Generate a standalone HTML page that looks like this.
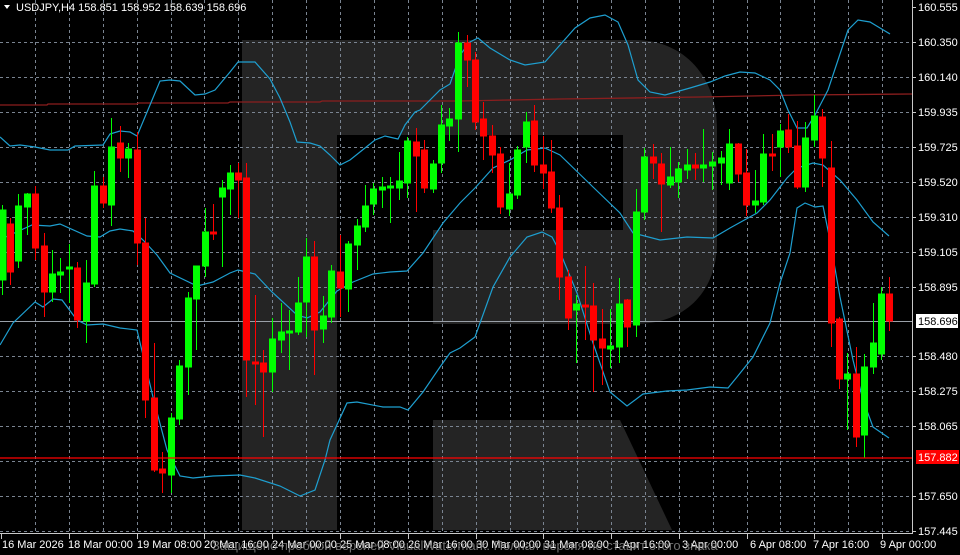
<!DOCTYPE html>
<html><head><meta charset="utf-8"><style>
html,body{margin:0;padding:0;background:#000;}
body{width:960px;height:555px;overflow:hidden;}
svg{display:block;font-family:"Liberation Sans","Noto Sans CJK JP",sans-serif;}
</style></head><body>
<svg width="960" height="555" viewBox="0 0 960 555" xmlns="http://www.w3.org/2000/svg">
<rect width="960" height="555" fill="#000"/>
<!-- watermark R -->
<path d="M242,40 H635 C685,40 717,78 717,128 V242 C717,292 685,324 635,324 H433 V230 H623 V135 H337 V530 H242 Z" fill="#242424"/>
<path d="M433,420 H620 L672,530 H433 Z" fill="#242424"/>
<!-- grid -->
<g stroke="#7a8491" stroke-width="1" stroke-dasharray="3,3">
<line x1="35.5" y1="0" x2="35.5" y2="532"/><line x1="69.5" y1="0" x2="69.5" y2="532"/><line x1="103.5" y1="0" x2="103.5" y2="532"/><line x1="137.5" y1="0" x2="137.5" y2="532"/><line x1="171.5" y1="0" x2="171.5" y2="532"/><line x1="204.5" y1="0" x2="204.5" y2="532"/><line x1="238.5" y1="0" x2="238.5" y2="532"/><line x1="272.5" y1="0" x2="272.5" y2="532"/><line x1="306.5" y1="0" x2="306.5" y2="532"/><line x1="340.5" y1="0" x2="340.5" y2="532"/><line x1="374.5" y1="0" x2="374.5" y2="532"/><line x1="408.5" y1="0" x2="408.5" y2="532"/><line x1="442.5" y1="0" x2="442.5" y2="532"/><line x1="476.5" y1="0" x2="476.5" y2="532"/><line x1="510.5" y1="0" x2="510.5" y2="532"/><line x1="543.5" y1="0" x2="543.5" y2="532"/><line x1="577.5" y1="0" x2="577.5" y2="532"/><line x1="611.5" y1="0" x2="611.5" y2="532"/><line x1="645.5" y1="0" x2="645.5" y2="532"/><line x1="679.5" y1="0" x2="679.5" y2="532"/><line x1="713.5" y1="0" x2="713.5" y2="532"/><line x1="747.5" y1="0" x2="747.5" y2="532"/><line x1="780.5" y1="0" x2="780.5" y2="532"/><line x1="814.5" y1="0" x2="814.5" y2="532"/><line x1="848.5" y1="0" x2="848.5" y2="532"/><line x1="882.5" y1="0" x2="882.5" y2="532"/>
<line x1="0" y1="42.5" x2="912" y2="42.5"/><line x1="0" y1="77.5" x2="912" y2="77.5"/><line x1="0" y1="112.5" x2="912" y2="112.5"/><line x1="0" y1="147.5" x2="912" y2="147.5"/><line x1="0" y1="182.5" x2="912" y2="182.5"/><line x1="0" y1="217.5" x2="912" y2="217.5"/><line x1="0" y1="252.5" x2="912" y2="252.5"/><line x1="0" y1="287.5" x2="912" y2="287.5"/><line x1="0" y1="356.5" x2="912" y2="356.5"/><line x1="0" y1="391.5" x2="912" y2="391.5"/><line x1="0" y1="426.5" x2="912" y2="426.5"/><line x1="0" y1="461.5" x2="912" y2="461.5"/><line x1="0" y1="496.5" x2="912" y2="496.5"/><line x1="0" y1="531.5" x2="912" y2="531.5"/>
</g>
<!-- current price line -->
<line x1="0" y1="321.5" x2="912" y2="321.5" stroke="#9aa0a8" stroke-width="1"/>
<!-- MA red line -->
<polyline fill="none" stroke="#8b1e1e" stroke-width="1.3" points="0,105 47,105 48,104 137,104 138,103 228,103 230,102 320,102 322,101 460,101 560,99 700,97 800,95 912,94"/>
<!-- Bollinger bands -->
<g fill="none" stroke="#1e9fd0" stroke-width="1.2">
<polyline points="0,137 10,146 20,145 35,147 50,150 68,150 75,146 103,145 110,134 120,131 130,132 137,136 150,105 160,81 170,80 180,81 195,95 205,94 215,90 230,72 238,62 255,62 270,79 280,98 290,122 297,142 310,143 320,146 330,155 340,165 350,160 365,148 375,140 385,136 398,139 405,125 415,112 420,110 430,100 440,90 450,84 460,55 470,42 478,38 490,48 510,60 525,65 545,62 560,45 575,28 590,18 605,15 618,22 628,45 638,80 650,92 665,95 690,88 710,82 725,76 740,72 755,73 770,80 780,90 788,110 797,128 807,128 815,115 828,90 838,60 848,30 858,20 870,22 880,28 890,34"/>
<polyline points="0,240 10,235 32,225 50,226 60,224 87,236 100,237 110,231 120,229 133,231 143,240 157,255 170,273 197,286 213,282 230,273 238,270 255,274 272,292 297,315 307,318 320,312 337,291 353,282 373,274 390,272 407,271 423,253 443,223 460,203 475,188 493,168 510,160 527,150 545,148 560,155 593,187 620,213 633,233 660,240 687,237 713,238 730,228 757,213 770,200 787,178 797,168 813,163 823,165 840,180 857,200 873,222 889,236"/>
<polyline points="0,345 13,323 35,302 43,307 53,299 62,300 77,320 87,325 103,324 120,328 137,330 153,397 167,450 180,476 193,478 213,476 240,475 255,478 280,486 300,496 315,490 325,460 330,440 347,403 357,402 383,407 400,407 408,410 423,392 440,367 450,353 460,348 475,337 493,287 510,257 527,237 542,232 552,237 560,252 577,293 593,343 610,392 627,406 643,394 667,391 687,390 710,387 728,388 737,377 753,357 770,323 780,283 790,253 797,208 805,203 815,207 823,206 830,240 840,297 853,360 863,400 873,427 889,438"/>
</g>
<!-- green candles -->
<g stroke="#00ff00" fill="#00ff00" stroke-width="1">
<line x1="2.5" y1="205" x2="2.5" y2="295"/><rect x="0" y="210" width="6" height="70"/>
<line x1="18.5" y1="194" x2="18.5" y2="268"/><rect x="15.5" y="206" width="6" height="55"/>
<line x1="27.5" y1="193" x2="27.5" y2="235"/><rect x="24.5" y="194" width="6" height="13"/>
<line x1="52.5" y1="250" x2="52.5" y2="302"/><rect x="49.5" y="274" width="6" height="18"/>
<line x1="60.5" y1="258" x2="60.5" y2="293"/><rect x="57.5" y="272" width="6" height="3"/>
<line x1="69.5" y1="244" x2="69.5" y2="303"/><rect x="66.5" y="267" width="6" height="2"/>
<line x1="86.5" y1="260" x2="86.5" y2="343"/><rect x="83.5" y="283" width="6" height="38"/>
<line x1="94.5" y1="171" x2="94.5" y2="287"/><rect x="91.5" y="186" width="6" height="98"/>
<line x1="111.5" y1="118" x2="111.5" y2="226"/><rect x="108.5" y="147" width="6" height="58"/>
<line x1="128.5" y1="143" x2="128.5" y2="178"/><rect x="125.5" y="149" width="6" height="9"/>
<line x1="171.5" y1="413" x2="171.5" y2="493"/><rect x="168.5" y="418" width="6" height="57"/>
<line x1="179.5" y1="360" x2="179.5" y2="425"/><rect x="176.5" y="366" width="6" height="53"/>
<line x1="188.5" y1="292" x2="188.5" y2="395"/><rect x="185.5" y="298" width="6" height="69"/>
<line x1="196.5" y1="266" x2="196.5" y2="350"/><rect x="193.5" y="266" width="6" height="33"/>
<line x1="205.5" y1="208" x2="205.5" y2="277"/><rect x="202.5" y="232" width="6" height="34"/>
<line x1="222.5" y1="180" x2="222.5" y2="267"/><rect x="219.5" y="188" width="6" height="9"/>
<line x1="230.5" y1="165" x2="230.5" y2="215"/><rect x="227.5" y="173" width="6" height="16"/>
<line x1="272.5" y1="318" x2="272.5" y2="392"/><rect x="269.5" y="339" width="6" height="33"/>
<line x1="281.5" y1="303" x2="281.5" y2="353"/><rect x="278.5" y="332" width="6" height="8"/>
<line x1="289.5" y1="310" x2="289.5" y2="370"/><rect x="286.5" y="331" width="6" height="2"/>
<line x1="298.5" y1="277" x2="298.5" y2="335"/><rect x="295.5" y="303" width="6" height="29"/>
<line x1="306.5" y1="238" x2="306.5" y2="337"/><rect x="303.5" y="257" width="6" height="45"/>
<line x1="323.5" y1="296" x2="323.5" y2="343"/><rect x="320.5" y="316" width="6" height="13"/>
<line x1="331.5" y1="265" x2="331.5" y2="323"/><rect x="328.5" y="271" width="6" height="46"/>
<line x1="348.5" y1="241" x2="348.5" y2="312"/><rect x="345.5" y="244" width="6" height="45"/>
<line x1="357.5" y1="219" x2="357.5" y2="270"/><rect x="354.5" y="226" width="6" height="19"/>
<line x1="365.5" y1="185" x2="365.5" y2="232"/><rect x="362.5" y="206" width="6" height="21"/>
<line x1="373.5" y1="183" x2="373.5" y2="215"/><rect x="370.5" y="189" width="6" height="15"/>
<line x1="382.5" y1="177" x2="382.5" y2="208"/><rect x="379.5" y="187" width="6" height="3"/>
<line x1="390.5" y1="177" x2="390.5" y2="223"/><rect x="387.5" y="186" width="6" height="2"/>
<line x1="399.5" y1="152" x2="399.5" y2="200"/><rect x="396.5" y="181" width="6" height="7"/>
<line x1="407.5" y1="137" x2="407.5" y2="198"/><rect x="404.5" y="141" width="6" height="42"/>
<line x1="433.5" y1="160" x2="433.5" y2="193"/><rect x="430.5" y="164" width="6" height="25"/>
<line x1="441.5" y1="105" x2="441.5" y2="173"/><rect x="438.5" y="125" width="6" height="38"/>
<line x1="449.5" y1="108" x2="449.5" y2="141"/><rect x="446.5" y="119" width="6" height="7"/>
<line x1="458.5" y1="32" x2="458.5" y2="152"/><rect x="455.5" y="43" width="6" height="76"/>
<line x1="509.5" y1="163" x2="509.5" y2="216"/><rect x="506.5" y="194" width="6" height="15"/>
<line x1="517.5" y1="146" x2="517.5" y2="199"/><rect x="514.5" y="150" width="6" height="45"/>
<line x1="526.5" y1="112" x2="526.5" y2="163"/><rect x="523.5" y="122" width="6" height="25"/>
<line x1="576.5" y1="295" x2="576.5" y2="363"/><rect x="573.5" y="304" width="6" height="6"/>
<line x1="610.5" y1="309" x2="610.5" y2="368"/><rect x="607.5" y="346" width="6" height="3"/>
<line x1="619.5" y1="278" x2="619.5" y2="363"/><rect x="616.5" y="304" width="6" height="43"/>
<line x1="636.5" y1="189" x2="636.5" y2="337"/><rect x="633.5" y="212" width="6" height="113"/>
<line x1="644.5" y1="148" x2="644.5" y2="220"/><rect x="641.5" y="157" width="6" height="55"/>
<line x1="670.5" y1="147" x2="670.5" y2="188"/><rect x="667.5" y="177" width="6" height="8"/>
<line x1="678.5" y1="162" x2="678.5" y2="198"/><rect x="675.5" y="169" width="6" height="13"/>
<line x1="687.5" y1="149" x2="687.5" y2="179"/><rect x="684.5" y="165" width="6" height="5"/>
<line x1="703.5" y1="129" x2="703.5" y2="182"/><rect x="700.5" y="165" width="6" height="3"/>
<line x1="712.5" y1="152" x2="712.5" y2="190"/><rect x="709.5" y="162" width="6" height="4"/>
<line x1="721.5" y1="151" x2="721.5" y2="185"/><rect x="718.5" y="158" width="6" height="5"/>
<line x1="729.5" y1="129" x2="729.5" y2="190"/><rect x="726.5" y="144" width="6" height="39"/>
<line x1="755.5" y1="170" x2="755.5" y2="213"/><rect x="752.5" y="201" width="6" height="4"/>
<line x1="763.5" y1="134" x2="763.5" y2="205"/><rect x="760.5" y="154" width="6" height="48"/>
<line x1="780.5" y1="124" x2="780.5" y2="177"/><rect x="777.5" y="131" width="6" height="16"/>
<line x1="805.5" y1="122" x2="805.5" y2="192"/><rect x="802.5" y="138" width="6" height="49"/>
<line x1="814.5" y1="95" x2="814.5" y2="147"/><rect x="811.5" y="116" width="6" height="24"/>
<line x1="847.5" y1="353" x2="847.5" y2="430"/><rect x="844.5" y="374" width="6" height="5"/>
<line x1="864.5" y1="354" x2="864.5" y2="458"/><rect x="861.5" y="367" width="6" height="68"/>
<line x1="873.5" y1="303" x2="873.5" y2="374"/><rect x="870.5" y="343" width="6" height="24"/>
<line x1="881.5" y1="287" x2="881.5" y2="360"/><rect x="878.5" y="294" width="6" height="60"/>
</g>
<!-- red candles -->
<g stroke="#ff0000" fill="#ff0000" stroke-width="1">
<line x1="10.5" y1="218" x2="10.5" y2="285"/><rect x="7.5" y="224" width="6" height="48"/>
<line x1="35.5" y1="186" x2="35.5" y2="260"/><rect x="32.5" y="194" width="6" height="54"/>
<line x1="44.5" y1="233" x2="44.5" y2="317"/><rect x="41.5" y="246" width="6" height="46"/>
<line x1="77.5" y1="262" x2="77.5" y2="328"/><rect x="74.5" y="268" width="6" height="52"/>
<line x1="103.5" y1="177" x2="103.5" y2="208"/><rect x="100.5" y="186" width="6" height="17"/>
<line x1="120.5" y1="126" x2="120.5" y2="172"/><rect x="117.5" y="143" width="6" height="15"/>
<line x1="137.5" y1="132" x2="137.5" y2="265"/><rect x="134.5" y="150" width="6" height="93"/>
<line x1="145.5" y1="218" x2="145.5" y2="418"/><rect x="142.5" y="243" width="6" height="157"/>
<line x1="154.5" y1="343" x2="154.5" y2="472"/><rect x="151.5" y="398" width="6" height="72"/>
<line x1="162.5" y1="452" x2="162.5" y2="493"/><rect x="159.5" y="469" width="6" height="4"/>
<line x1="213.5" y1="204" x2="213.5" y2="240"/><rect x="210.5" y="232" width="6" height="2"/>
<line x1="238.5" y1="163" x2="238.5" y2="218"/><rect x="235.5" y="173" width="6" height="7"/>
<line x1="246.5" y1="163" x2="246.5" y2="397"/><rect x="243.5" y="178" width="6" height="182"/>
<line x1="255.5" y1="295" x2="255.5" y2="405"/><rect x="252.5" y="362" width="6" height="2"/>
<line x1="263.5" y1="350" x2="263.5" y2="437"/><rect x="260.5" y="363" width="6" height="9"/>
<line x1="314.5" y1="241" x2="314.5" y2="375"/><rect x="311.5" y="257" width="6" height="73"/>
<line x1="340.5" y1="235" x2="340.5" y2="317"/><rect x="337.5" y="272" width="6" height="16"/>
<line x1="416.5" y1="128" x2="416.5" y2="212"/><rect x="413.5" y="142" width="6" height="14"/>
<line x1="424.5" y1="140" x2="424.5" y2="193"/><rect x="421.5" y="150" width="6" height="38"/>
<line x1="467.5" y1="35" x2="467.5" y2="87"/><rect x="464.5" y="43" width="6" height="17"/>
<line x1="475.5" y1="52" x2="475.5" y2="130"/><rect x="472.5" y="60" width="6" height="62"/>
<line x1="483.5" y1="102" x2="483.5" y2="160"/><rect x="480.5" y="119" width="6" height="17"/>
<line x1="492.5" y1="125" x2="492.5" y2="173"/><rect x="489.5" y="136" width="6" height="19"/>
<line x1="500.5" y1="147" x2="500.5" y2="214"/><rect x="497.5" y="154" width="6" height="53"/>
<line x1="534.5" y1="105" x2="534.5" y2="172"/><rect x="531.5" y="121" width="6" height="44"/>
<line x1="543.5" y1="136" x2="543.5" y2="189"/><rect x="540.5" y="165" width="6" height="8"/>
<line x1="551.5" y1="140" x2="551.5" y2="213"/><rect x="548.5" y="172" width="6" height="36"/>
<line x1="559.5" y1="195" x2="559.5" y2="300"/><rect x="556.5" y="208" width="6" height="69"/>
<line x1="568.5" y1="270" x2="568.5" y2="330"/><rect x="565.5" y="277" width="6" height="41"/>
<line x1="585.5" y1="266" x2="585.5" y2="340"/><rect x="582.5" y="305" width="6" height="2"/>
<line x1="593.5" y1="283" x2="593.5" y2="392"/><rect x="590.5" y="306" width="6" height="34"/>
<line x1="602.5" y1="309" x2="602.5" y2="385"/><rect x="599.5" y="339" width="6" height="9"/>
<line x1="627.5" y1="299" x2="627.5" y2="347"/><rect x="624.5" y="300" width="6" height="27"/>
<line x1="653.5" y1="144" x2="653.5" y2="179"/><rect x="650.5" y="157" width="6" height="6"/>
<line x1="661.5" y1="153" x2="661.5" y2="232"/><rect x="658.5" y="164" width="6" height="20"/>
<line x1="695.5" y1="153" x2="695.5" y2="180"/><rect x="692.5" y="165" width="6" height="3"/>
<line x1="738.5" y1="143" x2="738.5" y2="182"/><rect x="735.5" y="144" width="6" height="30"/>
<line x1="746.5" y1="149" x2="746.5" y2="216"/><rect x="743.5" y="173" width="6" height="32"/>
<line x1="772.5" y1="134" x2="772.5" y2="171"/><rect x="769.5" y="154" width="6" height="2"/>
<line x1="788.5" y1="114" x2="788.5" y2="153"/><rect x="785.5" y="130" width="6" height="17"/>
<line x1="797.5" y1="121" x2="797.5" y2="189"/><rect x="794.5" y="146" width="6" height="41"/>
<line x1="822.5" y1="109" x2="822.5" y2="187"/><rect x="819.5" y="117" width="6" height="41"/>
<line x1="831.5" y1="141" x2="831.5" y2="347"/><rect x="828.5" y="168" width="6" height="155"/>
<line x1="839.5" y1="317" x2="839.5" y2="389"/><rect x="836.5" y="319" width="6" height="60"/>
<line x1="856.5" y1="347" x2="856.5" y2="447"/><rect x="853.5" y="374" width="6" height="63"/>
<line x1="889.5" y1="277" x2="889.5" y2="331"/><rect x="886.5" y="294" width="6" height="27"/>
</g>
<!-- red horizontal level -->
<line x1="0" y1="458" x2="912" y2="458" stroke="#ff0000" stroke-width="1.3"/>
<!-- axes -->
<line x1="912.5" y1="0" x2="912.5" y2="534" stroke="#c8c8c8" stroke-width="1"/>
<line x1="0" y1="533.5" x2="913" y2="533.5" stroke="#c8c8c8" stroke-width="1"/>
<g stroke="#c8c8c8" stroke-width="1">
<line x1="913" y1="7.5" x2="916" y2="7.5"/><line x1="913" y1="42.5" x2="916" y2="42.5"/><line x1="913" y1="77.5" x2="916" y2="77.5"/><line x1="913" y1="112.5" x2="916" y2="112.5"/><line x1="913" y1="147.5" x2="916" y2="147.5"/><line x1="913" y1="182.5" x2="916" y2="182.5"/><line x1="913" y1="217.5" x2="916" y2="217.5"/><line x1="913" y1="252.5" x2="916" y2="252.5"/><line x1="913" y1="287.5" x2="916" y2="287.5"/><line x1="913" y1="356.5" x2="916" y2="356.5"/><line x1="913" y1="391.5" x2="916" y2="391.5"/><line x1="913" y1="426.5" x2="916" y2="426.5"/><line x1="913" y1="496.5" x2="916" y2="496.5"/><line x1="913" y1="531.5" x2="916" y2="531.5"/>
<line x1="1.5" y1="534" x2="1.5" y2="539"/><line x1="69.5" y1="534" x2="69.5" y2="539"/><line x1="137.5" y1="534" x2="137.5" y2="539"/><line x1="204.5" y1="534" x2="204.5" y2="539"/><line x1="272.5" y1="534" x2="272.5" y2="539"/><line x1="340.5" y1="534" x2="340.5" y2="539"/><line x1="408.5" y1="534" x2="408.5" y2="539"/><line x1="476.5" y1="534" x2="476.5" y2="539"/><line x1="543.5" y1="534" x2="543.5" y2="539"/><line x1="611.5" y1="534" x2="611.5" y2="539"/><line x1="679.5" y1="534" x2="679.5" y2="539"/><line x1="747.5" y1="534" x2="747.5" y2="539"/><line x1="814.5" y1="534" x2="814.5" y2="539"/><line x1="882.5" y1="534" x2="882.5" y2="539"/>
</g>
<g fill="#fff" font-size="11">
<text x="918" y="11">160.555</text><text x="918" y="46">160.350</text><text x="918" y="81">160.140</text><text x="918" y="116">159.935</text><text x="918" y="151">159.725</text><text x="918" y="186">159.520</text><text x="918" y="221">159.310</text><text x="918" y="256">159.105</text><text x="918" y="291">158.895</text><text x="918" y="360">158.480</text><text x="918" y="395">158.275</text><text x="918" y="430">158.065</text><text x="918" y="500">157.650</text><text x="918" y="535">157.445</text>
</g>
<rect x="916" y="314" width="42" height="14" fill="#fff"/>
<text x="918" y="325" font-size="11" fill="#000">158.696</text>
<rect x="916" y="450" width="43" height="14" fill="#ff0000"/>
<text x="918" y="461" font-size="11" fill="#fff">157.882</text>
<!-- header -->
<path d="M4,5 L10,5 L7,9 Z" fill="#fff"/>
<text x="16" y="11" font-size="11" fill="#fff">USDJPY,H4  158.851 158.952 158.639 158.696</text>
<!-- date labels -->
<g fill="#fff" font-size="11">
<text x="2" y="548">16 Mar 2026</text><text x="68" y="548">18 Mar 00:00</text><text x="137" y="548">19 Mar 08:00</text><text x="204" y="548">20 Mar 16:00</text><text x="272" y="548">24 Mar 00:00</text><text x="340" y="548">25 Mar 08:00</text><text x="408" y="548">26 Mar 16:00</text><text x="476" y="548">30 Mar 00:00</text><text x="544" y="548">31 Mar 08:00</text><text x="614" y="548">1 Apr 16:00</text><text x="682" y="548">3 Apr 00:00</text><text x="750" y="548">6 Apr 08:00</text><text x="813" y="548">7 Apr 16:00</text><text x="880" y="548">9 Apr 00:00</text>
</g>
<text x="212" y="550" font-size="13" fill="#8c8c8c" fill-opacity="0.8">Защищено пробной версией VisualWatermark. Полная версия не ставит этого знака</text>
</svg>
</body></html>
